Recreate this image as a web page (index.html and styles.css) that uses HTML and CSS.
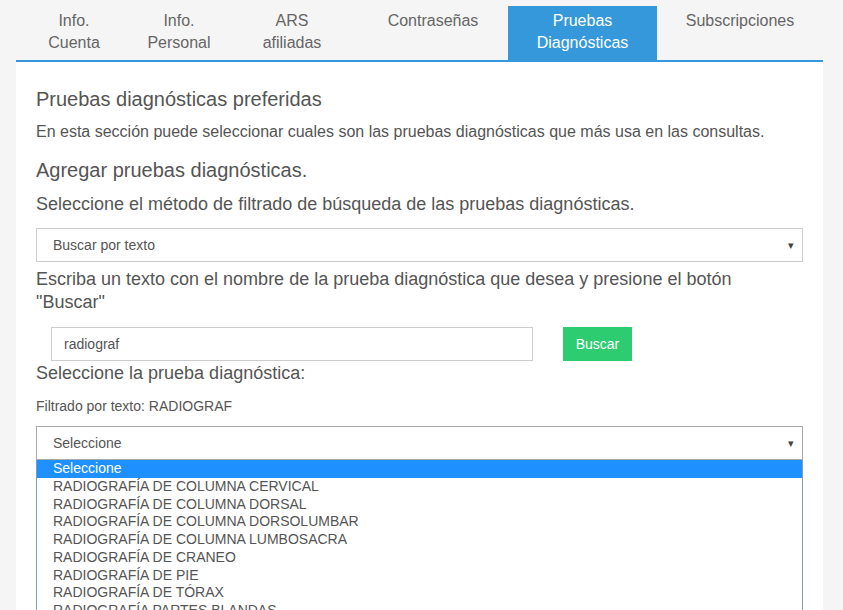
FILE: index.html
```html
<!doctype html>
<html lang="es">
<head>
  <meta charset="utf-8">
  <title>Pruebas diagnósticas</title>
  <link rel="stylesheet" href="styles.css">
</head>
<body>
  <div class="wrapper">
    <div class="tabs">
      <div class="tab tab-cuenta">Info.<br>Cuenta</div>
      <div class="tab tab-personal">Info.<br>Personal</div>
      <div class="tab tab-ars">ARS<br>afiliadas</div>
      <div class="tab tab-pass">Contraseñas</div>
      <div class="tab tab-pruebas active">Pruebas<br>Diagnósticas</div>
      <div class="tab tab-subs">Subscripciones</div>
    </div>
    <div class="panel">
      <h3 class="title">Pruebas diagnósticas preferidas</h3>
      <p class="intro">En esta sección puede seleccionar cuales son las pruebas diagnósticas que más usa en las consultas.</p>
      <h3 class="subtitle">Agregar pruebas diagnósticas.</h3>
      <p class="label label-method">Seleccione el método de filtrado de búsqueda de las pruebas diagnósticas.</p>
      <div class="select select-method">
        <span>Buscar por texto</span>
        <span class="arrow">&#9662;</span>
      </div>
      <p class="label label-text">Escriba un texto con el nombre de la prueba diagnóstica que desea y presione el botón "Buscar"</p>
      <div class="search">
        <div class="search-input">radiograf</div>
        <div class="search-button">Buscar</div>
      </div>
      <p class="label label-test">Seleccione la prueba diagnóstica:</p>
      <p class="filter">Filtrado por texto: RADIOGRAF</p>
      <div class="select select-test">
        <span>Seleccione</span>
        <span class="arrow">&#9662;</span>
      </div>
      <div class="options">
        <div class="option selected">Seleccione</div>
        <div class="option">RADIOGRAFÍA DE COLUMNA CERVICAL</div>
        <div class="option">RADIOGRAFÍA DE COLUMNA DORSAL</div>
        <div class="option">RADIOGRAFÍA DE COLUMNA DORSOLUMBAR</div>
        <div class="option">RADIOGRAFÍA DE COLUMNA LUMBOSACRA</div>
        <div class="option">RADIOGRAFÍA DE CRANEO</div>
        <div class="option">RADIOGRAFÍA DE PIE</div>
        <div class="option">RADIOGRAFÍA DE TÓRAX</div>
        <div class="option">RADIOGRAFÍA PARTES BLANDAS</div>
      </div>
    </div>
  </div>
</body>
</html>
```

FILE: styles.css
```css
html, body {
  margin: 0;
  height: 100%;
  overflow: hidden;
}

body {
  background-color: #f5f5f5;
  font-family: "Liberation Sans", Arial, sans-serif;
  color: #555;
}

.wrapper {
  width: 807px;
  margin: 0 16px;
}

.tabs {
  display: grid;
  grid-template-columns: 116px 94px 132px 150px 149px 166px;
  padding-top: 6px;
  border-bottom: 2px solid #3498db;
}

.tab {
  height: 44px;
  padding: 4px 0 6px;
  font-size: 16px;
  line-height: 22px;
  text-align: center;
  color: #666;
}

.tab.active {
  background-color: #3498db;
  color: #fff;
}

.panel {
  background-color: #fff;
  padding: 0 20px;
  height: 600px;
}

.panel h3,
.panel p {
  margin: 0;
  font-weight: normal;
}

.title {
  padding-top: 25px;
  font-size: 20px;
  line-height: 24px;
}

.intro {
  margin-top: 11px !important;
  font-size: 16px;
  line-height: 20px;
}

.subtitle {
  margin-top: 16px !important;
  font-size: 20px;
  line-height: 24px;
}

.label {
  font-size: 18px;
  line-height: 23px;
}

.label-method {
  margin-top: 11px !important;
}

.select {
  display: flex;
  justify-content: space-between;
  align-items: center;
  box-sizing: border-box;
  height: 34px;
  padding: 0 8px 0 16px;
  border: 1px solid #ccc;
  font-size: 14px;
  color: #555;
}

.select .arrow {
  font-size: 11px;
  color: #444;
}

.select-method {
  margin-top: 12px;
}

.label-text {
  margin-top: 6px !important;
}

.search {
  display: flex;
  gap: 30px;
  margin: 13px 0 0 15px;
}

.search-input {
  box-sizing: border-box;
  width: 482px;
  height: 34px;
  padding: 0 12px;
  border: 1px solid #ccc;
  font-size: 14px;
  line-height: 32px;
  color: #555;
}

.search-button {
  width: 69px;
  height: 34px;
  background-color: #2ecc71;
  color: #fff;
  font-size: 14px;
  line-height: 34px;
  text-align: center;
}

.label-test {
  margin-top: 1px !important;
}

.filter {
  margin-top: 12px !important;
  font-size: 14px;
  line-height: 18px;
}

.select-test {
  margin-top: 11px;
  border-color: #aaa;
}

.options {
  border: 1px solid #7f9db9;
  border-top: none;
  height: 200px;
}

.option {
  height: 17.75px;
  padding-left: 16px;
  font-size: 14px;
  line-height: 17.75px;
  color: #555;
  white-space: nowrap;
}

.option.selected {
  background-color: #1e90ff;
  color: #fff;
}
```
